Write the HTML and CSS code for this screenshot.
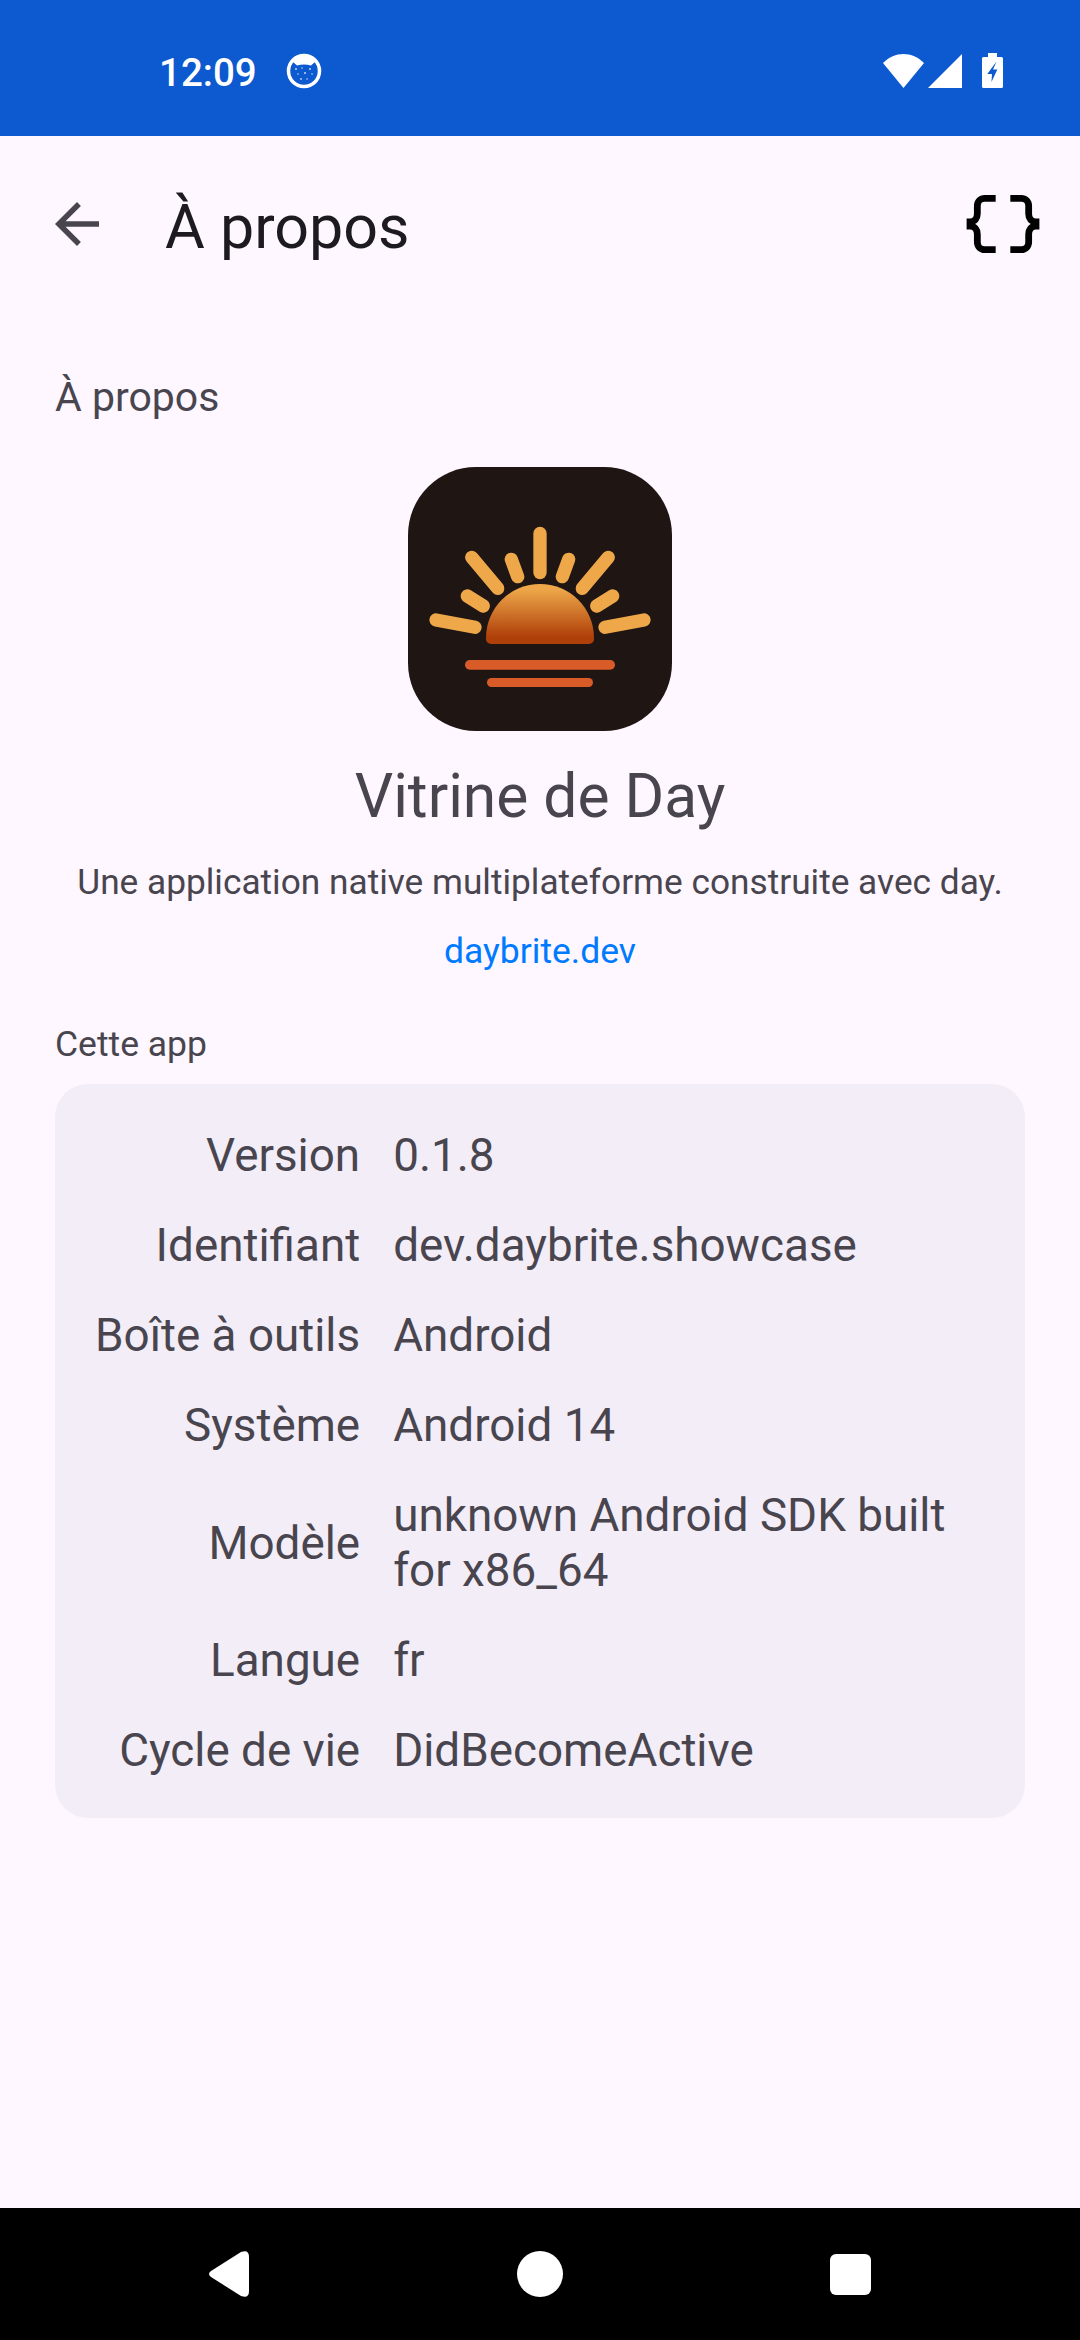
FILE: index.html

```html
<!DOCTYPE html>
<html lang="fr">
<head>
  <meta charset="UTF-8">
  <title>À propos - Vitrine de Day</title>
  <link rel="stylesheet" href="styles.css">
</head>
<body>
  <div class="status-bar">
    <span class="clock">12:09</span>
    <svg class="cat-icon" viewBox="0 0 36 36">
      <circle cx="18" cy="18" r="15.5" fill="none" stroke="#fff" stroke-width="3.5"/>
      <path d="M7 9 L11 12.5 Q18 10.5 25 12.5 L29 9 L25 4 H11 Z" fill="#fff"/>
      <g fill="#fff" opacity="0.75">
        <circle cx="10" cy="16" r="1"/><circle cx="16" cy="15" r="0.8"/><circle cx="24" cy="16" r="1"/>
        <circle cx="12" cy="21" r="0.8"/><circle cx="19" cy="20" r="1"/><circle cx="26" cy="21" r="0.8"/>
        <circle cx="15" cy="26" r="0.9"/><circle cx="21" cy="26" r="0.8"/>
      </g>
    </svg>
    <div class="status-icons">
      <svg class="wifi-icon" viewBox="0 0 41 34"><path d="M0 9 C6 3 13 0 20.5 0 S35 3 41 9 L20.5 34 Z" fill="#fff"/></svg>
      <svg class="signal-icon" viewBox="0 0 34 34"><path d="M0 34 L34 0 V34 Z" fill="#fff"/></svg>
      <svg class="battery-icon" viewBox="0 0 21 35">
        <path d="M6 0 H15 V4 H19.5 Q21 4 21 5.5 V33.5 Q21 35 19.5 35 H1.5 Q0 35 0 33.5 V5.5 Q0 4 1.5 4 H6 Z" fill="#fff"/>
        <path d="M14.5 8.5 L5.3 21 H10 L9.5 29 L15.3 16.5 H11 Z" fill="#0c59d0"/>
      </svg>
    </div>
  </div>

  <header class="app-bar">
    <svg class="back-icon" viewBox="0 0 24 24"><path d="M20 11H7.83l5.59-5.59L12 4l-8 8 8 8 1.41-1.41L7.83 13H20v-2z"/></svg>
    <h1 class="app-bar-title">À propos</h1>
    <svg class="data-icon" viewBox="0 0 24 24">
      <path d="M10 5H7a2 2 0 0 0-2 2v2.2c0 1.3-.7 2.2-2 2.2v1.2c1.3 0 2 .9 2 2.2V17a2 2 0 0 0 2 2h3"/>
      <path d="M14 5h3a2 2 0 0 1 2 2v2.2c0 1.3.7 2.2 2 2.2v1.2c-1.3 0-2 .9-2 2.2V17a2 2 0 0 1-2 2h-3"/>
    </svg>
  </header>

  <main class="content">
    <div class="section-title">À propos</div>

    <svg class="app-logo" viewBox="18 17 264 264">
      <defs>
        <linearGradient id="sunFill" x1="0" y1="0" x2="0" y2="1">
          <stop offset="0.08" stop-color="#eea84a"/>
          <stop offset="0.88" stop-color="#b0400a"/>
        </linearGradient>
      </defs>
      <rect x="18" y="17" width="264" height="264" rx="68" fill="#1f1513"/>
      <g stroke="#eea84a" stroke-width="13.3" stroke-linecap="round">
        <path d="M150 83.5 V122.5"/>
        <path d="M81.7 107.3 L107.7 138.3"/>
        <path d="M218.3 107.3 L192.3 138.3"/>
        <path d="M121.3 109.3 L127.7 126.7"/>
        <path d="M178.7 109.3 L172.3 126.7"/>
        <path d="M77.3 146 L93.3 156"/>
        <path d="M222.7 146 L206.7 156"/>
        <path d="M46 170 L85 177.3"/>
        <path d="M254 170 L215 177.3"/>
      </g>
      <path d="M96 188 A54 54 0 0 1 204 188 V189 a5 5 0 0 1 -5 5 H101 a5 5 0 0 1 -5 -5 Z" fill="url(#sunFill)"/>
      <rect x="75" y="210" width="150" height="9.7" rx="4.8" fill="#d95b28"/>
      <rect x="97" y="228" width="106" height="9" rx="4.5" fill="#d95b28"/>
    </svg>

    <h2 class="app-name">Vitrine de Day</h2>
    <p class="app-desc">Une application native multiplateforme construite avec day.</p>
    <a class="app-link" href="#">daybrite.dev</a>

    <div class="card-title">Cette app</div>
    <div class="info-card">
      <div class="info-label">Version</div><div class="info-value">0.1.8</div>
      <div class="info-label">Identifiant</div><div class="info-value">dev.daybrite.showcase</div>
      <div class="info-label">Boîte à outils</div><div class="info-value">Android</div>
      <div class="info-label">Système</div><div class="info-value">Android 14</div>
      <div class="info-label">Modèle</div><div class="info-value">unknown Android SDK built for x86_64</div>
      <div class="info-label">Langue</div><div class="info-value">fr</div>
      <div class="info-label">Cycle de vie</div><div class="info-value">DidBecomeActive</div>
    </div>
  </main>

  <nav class="nav-bar">
    <svg class="nav-back" viewBox="0 0 40 46"><path d="M2 20 L32 1 Q40 -2 40 6 V40 Q40 48 32 45 L2 26 Q-2 23 2 20 Z" fill="#fff"/></svg>
    <div class="nav-home"></div>
    <div class="nav-recent"></div>
  </nav>
</body>
</html>
```

FILE: styles.css

```css
html, body {
  margin: 0;
  padding: 0;
}
body {
  width: 1080px;
  height: 2340px;
  overflow: hidden;
  display: flex;
  flex-direction: column;
  background-color: #fef7ff;
  color: #49454f;
  font-family: Roboto, "Noto Sans", sans-serif;
}

/* status bar */
.status-bar {
  height: 136px;
  flex: none;
  display: flex;
  align-items: center;
  padding: 5px 77px 0 159px;
  box-sizing: border-box;
  background-color: #0c59d0;
  color: #fff;
}
.clock {
  padding-top: 3px;
  font-size: 38.5px;
  font-weight: 500;
}
.cat-icon {
  width: 36px;
  height: 36px;
  margin-left: 29px;
}
.status-icons {
  display: flex;
  align-items: flex-end;
  margin-left: auto;
}
.wifi-icon {
  width: 41px;
  height: 34px;
}
.signal-icon {
  width: 34px;
  height: 34px;
  margin-left: 4px;
}
.battery-icon {
  width: 21px;
  height: 35px;
  margin-left: 20px;
}

/* top bar */
.app-bar {
  height: 176px;
  flex: none;
  display: flex;
  align-items: center;
  padding: 0 33px 0 44px;
  box-sizing: border-box;
}
.back-icon {
  width: 66px;
  height: 66px;
  fill: #49454f;
}
.app-bar-title {
  margin: 0 0 0 55px;
  padding-top: 6px;
  font-size: 61px;
  font-weight: 400;
  color: #1d1b20;
}
.data-icon {
  width: 88px;
  height: 88px;
  margin-left: auto;
  fill: none;
  stroke: #000;
  stroke-width: 1.85;
}

/* page */
.content {
  flex: 1;
  display: flex;
  flex-direction: column;
  padding: 58px 55px 0;
}
.section-title {
  font-size: 41px;
  line-height: 55px;
}
.app-logo {
  width: 264px;
  height: 264px;
  margin: 42px auto 0;
}
.app-name {
  margin: 28px 0 0;
  font-size: 60.5px;
  line-height: 76px;
  font-weight: 400;
  text-align: center;
}
.app-desc {
  margin: 22px 0 0;
  font-size: 35.25px;
  line-height: 50px;
  text-align: center;
}
.app-link {
  margin-top: 19px;
  font-size: 35.5px;
  line-height: 50px;
  text-align: center;
  color: #007aff;
  text-decoration: none;
}
.card-title {
  margin-top: 43px;
  font-size: 35.5px;
  line-height: 50px;
}
.info-card {
  margin-top: 15px;
  padding: 44px 44px 40px 40px;
  display: grid;
  grid-template-columns: auto 1fr;
  align-items: center;
  gap: 35px 33px;
  background-color: #f3edf7;
  border-radius: 33px;
  font-size: 45.8px;
  line-height: 55px;
}
.info-label {
  text-align: right;
}

/* navigation */
.nav-bar {
  height: 132px;
  flex: none;
  display: flex;
  align-items: center;
  padding: 0 209px;
  box-sizing: border-box;
  justify-content: space-between;
  background-color: #000;
}
.nav-back {
  width: 40px;
  height: 46px;
}
.nav-home {
  width: 46px;
  height: 46px;
  border-radius: 50%;
  background-color: #fff;
}
.nav-recent {
  width: 41px;
  height: 41px;
  border-radius: 6px;
  background-color: #fff;
}
```
